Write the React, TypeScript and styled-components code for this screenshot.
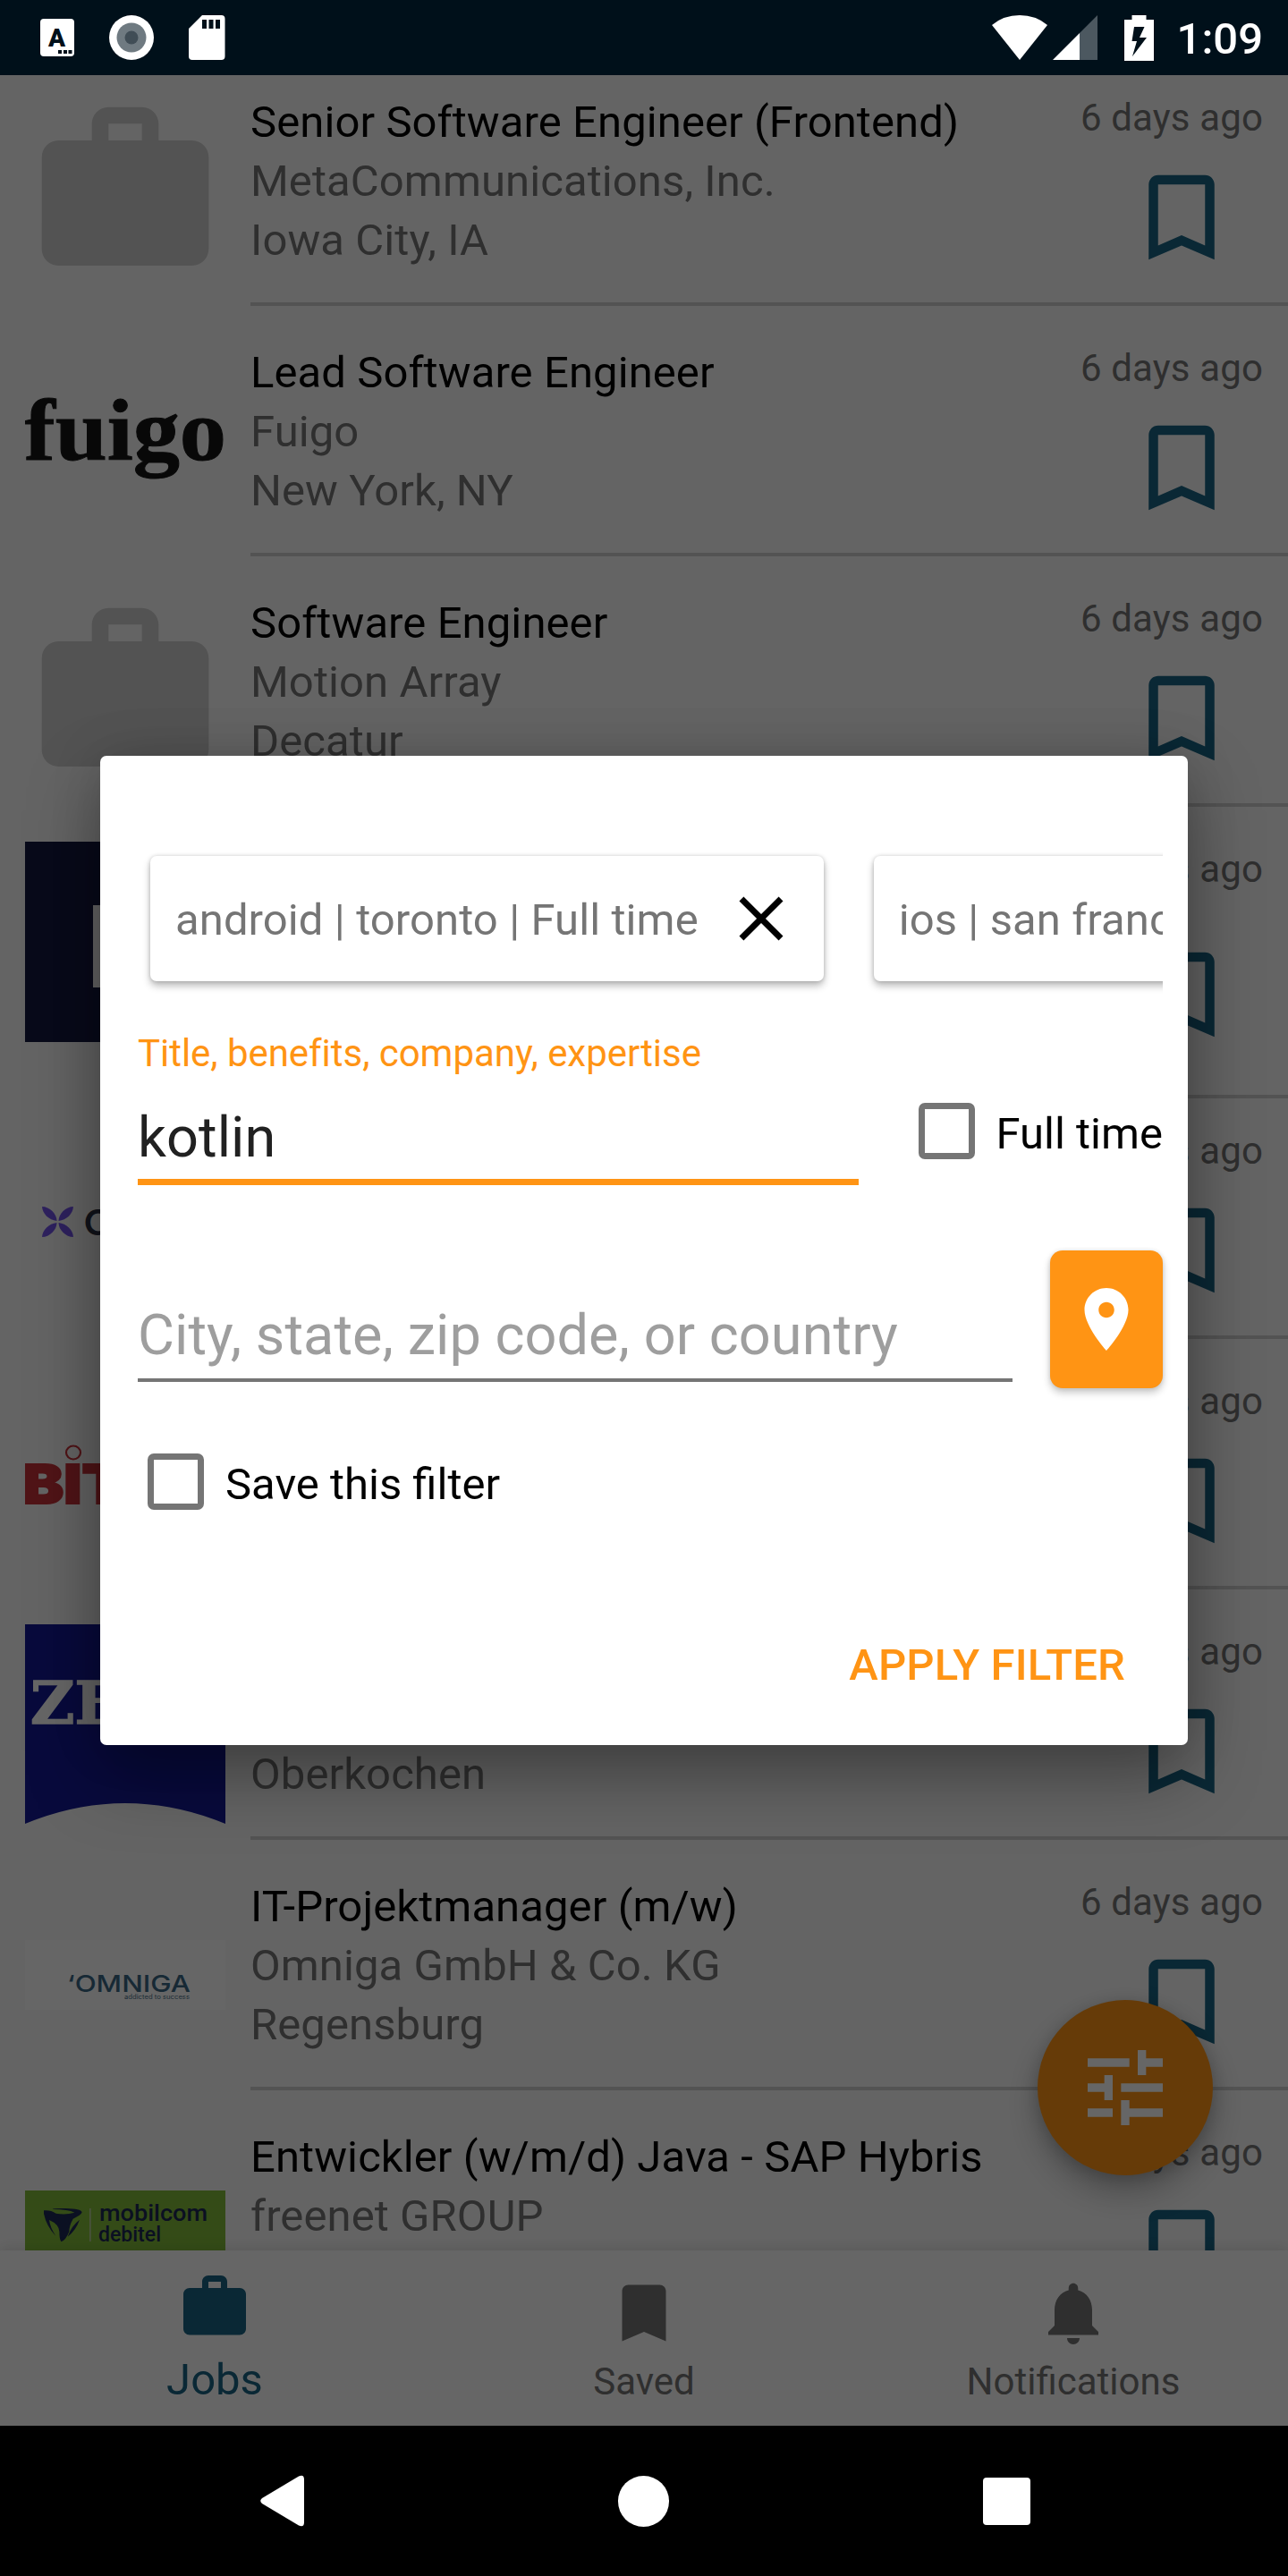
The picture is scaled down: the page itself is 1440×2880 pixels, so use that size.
import React from "react";
import styled, { createGlobalStyle } from "styled-components";

const GlobalStyle = createGlobalStyle`
  * { box-sizing: border-box; }
  body { margin: 0; background: #000; font-family: Roboto, "Noto Sans", sans-serif; }
  svg { display: block; }
`;

const accent = "#ff9414";
const teal = "#196484";
const secondary = "#757575";

/* ---------- Screen scaffold ---------- */

const Screen = styled.div`
  position: relative;
  display: grid;
  grid-template-rows: 84px 2432px 196px 168px;
  width: 1440px;
  height: 2880px;
  overflow: hidden;
  background: #fafafa;
`;

const StatusBar = styled.header`
  position: relative;
  z-index: 3;
  display: flex;
  align-items: center;
  justify-content: space-between;
  padding: 0 28px 0 45px;
  background: #00101a;
`;

const StatusGroup = styled.div<{ $gap?: number }>`
  display: flex;
  align-items: center;
  gap: ${(p) => p.$gap ?? 0}px;
`;

const SignalIcon = styled.svg`
  margin: 0 30px 0 6px;
`;

const Clock = styled.span`
  margin-left: 26px;
  padding-top: 4px;
  color: #fff;
  font-size: 49px;
  font-weight: 500;
  line-height: 58px;
`;

/* ---------- Job list ---------- */

const List = styled.main`
  position: relative;
  overflow: hidden;
`;

const Rows = styled.div`
  display: flex;
  flex-direction: column;
  margin-top: -22px;
`;

const Row = styled.article<{ $tall?: boolean }>`
  display: flex;
  flex-shrink: 0;
  gap: 28px;
  height: ${(p) => (p.$tall ? 326 : 280)}px;
  margin-bottom: ${(p) => (p.$tall ? -11 : 0)}px;
  padding-left: 28px;
`;

const Logo = styled.div`
  flex: 0 0 224px;
  height: 224px;
  margin-top: 39px;
`;

const RowBody = styled.div`
  display: flex;
  flex: 1;
  justify-content: space-between;
  border-bottom: 4px solid #d0d0d0;
`;

const JobText = styled.div`
  display: flex;
  flex-direction: column;
  padding-top: 42px;
  font-size: 49px;
  letter-spacing: 0.09px;
  line-height: 66px;
  white-space: nowrap;
`;

const Line = styled.span<{ $title?: boolean }>`
  min-height: 66px;
  color: ${(p) => (p.$title ? "#000" : secondary)};
`;

const Meta = styled.div<{ $tall?: boolean }>`
  display: flex;
  flex-direction: column;
  align-items: flex-end;
  gap: ${(p) => (p.$tall ? 52 : 23)}px;
  padding: 45px 28px 0 0;
`;

const Age = styled.span`
  color: ${secondary};
  font-size: 42px;
  letter-spacing: 0.15px;
  line-height: 50px;
  white-space: nowrap;
`;

const BookmarkIcon = styled.svg`
  width: 126px;
  height: 126px;
  margin-right: 28px;
  fill: ${teal};
`;

const Fab = styled.button`
  position: absolute;
  right: 84px;
  bottom: 84px;
  display: flex;
  align-items: center;
  justify-content: center;
  width: 196px;
  height: 196px;
  padding: 0;
  border: 0;
  border-radius: 50%;
  background: ${accent};
  box-shadow: 0 18px 36px rgba(0, 0, 0, 0.26), 0 4px 18px rgba(0, 0, 0, 0.16);
`;

/* ---------- Bottom navigation ---------- */

const Tabs = styled.nav`
  position: relative;
  display: grid;
  grid-template-columns: repeat(3, 1fr);
  background: #fff;
  box-shadow: 0 -2px 14px rgba(0, 0, 0, 0.12);
`;

const Tab = styled.div<{ $active?: boolean }>`
  display: flex;
  flex-direction: column;
  align-items: center;
  gap: ${(p) => (p.$active ? 7 : 8)}px;
  padding-top: ${(p) => (p.$active ? 21 : 28)}px;
  color: ${(p) => (p.$active ? teal : secondary)};
  font-size: ${(p) => (p.$active ? 49 : 42)}px;
  line-height: ${(p) => (p.$active ? 66 : 54)}px;

  svg {
    width: 84px;
    height: 84px;
    fill: currentColor;
  }
`;

const SystemBar = styled.footer`
  position: relative;
  z-index: 3;
  display: flex;
  align-items: center;
  justify-content: space-between;
  padding: 0 288px 0 291px;
  background: #000;
`;

/* ---------- Filter dialog ---------- */

const Scrim = styled.div`
  position: absolute;
  inset: 0;
  z-index: 2;
  display: flex;
  align-items: center;
  justify-content: center;
  padding: 84px 0 168px;
  background: rgba(0, 0, 0, 0.6);
`;

const Dialog = styled.section`
  display: flex;
  flex-direction: column;
  width: 1216px;
  height: 1106px;
  padding: 84px 28px 0;
  border-radius: 7px;
  background: #fff;
  box-shadow: 0 34px 80px rgba(0, 0, 0, 0.34), 0 0 60px rgba(0, 0, 0, 0.12);
`;

const Chips = styled.div`
  display: flex;
  flex-shrink: 0;
  gap: 56px;
  padding: 28px;
  overflow: hidden;
`;

const Chip = styled.div`
  display: flex;
  flex-shrink: 0;
  align-items: center;
  gap: 28px;
  height: 140px;
  padding: 0 28px;
  border-radius: 7px;
  background: #fff;
  box-shadow: 0 5px 9px rgba(0, 0, 0, 0.28), 0 0 4px rgba(0, 0, 0, 0.16);
`;

const ChipText = styled.span`
  padding-top: 4px;
  color: ${secondary};
  font-size: 49px;
  letter-spacing: 0.09px;
  line-height: 66px;
  white-space: nowrap;
`;

const Form = styled.div`
  display: flex;
  flex-direction: column;
  padding: 28px 0 0 14px;
`;

const FieldRow = styled.div`
  display: flex;
  justify-content: space-between;
`;

const Field = styled.div<{ $width: number }>`
  width: ${(p) => p.$width}px;
`;

const Label = styled.div`
  margin-bottom: 30px;
  color: ${accent};
  font-size: 42px;
  letter-spacing: -0.04px;
  line-height: 50px;
  white-space: nowrap;
`;

const Value = styled.div<{ $focused?: boolean }>`
  padding: 1px 0 ${(p) => (p.$focused ? 8 : 10)}px;
  border-bottom: ${(p) => (p.$focused ? `7px solid ${accent}` : `4px solid ${secondary}`)};
  color: ${(p) => (p.$focused ? "#212121" : "#9e9e9e")};
  font-size: 63px;
  letter-spacing: 0.06px;
  line-height: 76px;
  white-space: nowrap;
`;

const Check = styled.label<{ $top: number; $left?: number }>`
  display: flex;
  align-items: flex-start;
  gap: 24px;
  height: 68px;
  margin: ${(p) => p.$top}px 0 0 ${(p) => p.$left ?? 0}px;
  color: #000;
  font-size: 49px;
  line-height: 70px;
  white-space: nowrap;
`;

const Box = styled.span`
  width: 63px;
  height: 63px;
  border: 7px solid ${secondary};
  border-radius: 7px;
`;

const LocationRow = styled(FieldRow)`
  margin-top: 73px;

  ${Value} {
    margin-top: 56px;
  }
`;

const LocateButton = styled.button`
  display: flex;
  align-items: center;
  justify-content: center;
  width: 126px;
  height: 154px;
  padding: 0;
  border: 0;
  border-radius: 14px;
  background: ${accent};
  box-shadow: 0 5px 9px rgba(0, 0, 0, 0.22), 0 0 5px rgba(0, 0, 0, 0.1);
`;

const Apply = styled.button`
  align-self: flex-end;
  margin: 136px 42px 0 0;
  padding: 0;
  border: 0;
  background: none;
  color: ${accent};
  font: 500 49px/66px Roboto, sans-serif;
  letter-spacing: 0.12px;
`;

/* ---------- Drawings ---------- */

const WORK =
  "M20 6h-4V4c0-1.11-.89-2-2-2h-4c-1.11 0-2 .89-2 2v2H4c-1.11 0-1.99.89-1.99 2L2 19c0 1.11.89 2 2 2h16c1.11 0 2-.89 2-2V8c0-1.11-.89-2-2-2zm-6 0h-4V4h4v2z";

const Briefcase = ({ size, fill }: { size: number; fill?: string }) => (
  <svg width={size} height={size} viewBox="0 0 24 24" fill={fill}>
    <path d={WORK} />
  </svg>
);

const FuigoLogo = () => (
  <svg width="224" height="224" viewBox="0 0 224 224">
    <text x="-1" y="133" textLength="226" lengthAdjust="spacingAndGlyphs" fontFamily="Liberation Serif, serif" fontWeight="700" fontSize="98" fill="#161616" stroke="#161616" strokeWidth="1">
      fuigo
    </text>
  </svg>
);

const NavyLogo = () => (
  <svg width="224" height="224" viewBox="0 0 224 224">
    <path fill="#161a42" d="M0 0h224v224H0z" />
    <path fill="#fff" d="M76 71h24v92H76z" />
  </svg>
);

const PetalLogo = () => (
  <svg width="224" height="224" viewBox="0 0 224 224">
    <g fill="#7354ea" transform="translate(36.5 110)">
      <path d="M-1 -1C-1 -9-9 -17-17.500 -17C-17 -9-10 -2-1 -1z" />
      <path d="M1 -1C1 -9 9 -17 17.500 -17C17 -9 10 -2 1 -1z" />
      <path d="M-1 1C-1 9-9 17-17.500 17C-17 9-10 2-1 1z" />
      <path d="M1 1C1 9 9 17 17.500 17C17 9 10 2 1 1z" />
    </g>
    <text x="66" y="125" fontFamily="Lato, sans-serif" fontWeight="700" fontSize="40" fill="#2c3145">
      C
    </text>
  </svg>
);

const BitLogo = () => (
  <svg width="224" height="224" viewBox="0 0 224 224">
    <text x="-3" y="145" textLength="114" lengthAdjust="spacingAndGlyphs" fontFamily="Inter, sans-serif" fontWeight="900" fontSize="61" fill="#c8323a" stroke="#c8323a" strokeWidth="2">
      BIT
    </text>
    <ellipse cx="54" cy="88" rx="8" ry="7.500" fill="none" stroke="#c8323a" strokeWidth="2.200" />
  </svg>
);

const ZeissLogo = () => (
  <svg width="224" height="224" viewBox="0 0 224 224">
    <path fill="#141a96" d="M0 0h224v223Q112 177 0 223z" />
    <text x="6" y="111" textLength="101" lengthAdjust="spacingAndGlyphs" fontFamily="DejaVu Serif, serif" fontWeight="700" fontSize="66" fill="#fff" stroke="#fff" strokeWidth="1.500">
      ZE
    </text>
  </svg>
);

const OmnigaLogo = () => (
  <svg width="224" height="224" viewBox="0 0 224 224">
    <path fill="#fff" d="M0 73h224v78H0z" />
    <text x="47" y="131" textLength="138" lengthAdjust="spacingAndGlyphs" fontFamily="Inter, sans-serif" fontWeight="500" fontSize="26" fill="#3a6885">
      ‘OMNIGA
    </text>
    <text x="111" y="139" textLength="73" lengthAdjust="spacingAndGlyphs" fontFamily="Inter, sans-serif" fontSize="7" fill="#4d728a">
      addicted to success
    </text>
  </svg>
);

const MobilcomLogo = () => (
  <svg width="224" height="224" viewBox="0 0 224 224">
    <path fill="#82bc3a" d="M0 73h224v80H0z" />
    <g fill="#1c2855">
      <g transform="translate(-8 -216) scale(0.3333)">
        <path d="M87 934Q110 932 128 944Q160 950 190 941Q170 930 116 930Q118 926 160 927Q212 928 215 940Q212 950 185 962Q172 985 172 1005Q160 1035 145 1039Q139 1030 139 1005Q138 980 105 966Q108 990 127 1020Q95 985 87 945z" />
        <path d="M207 965Q180 985 167 1022Q195 1000 207 965z" />
      </g>
      <text x="83" y="107" textLength="121" lengthAdjust="spacingAndGlyphs" fontFamily="Roboto, sans-serif" fontWeight="500" fontSize="26">
        mobilcom
      </text>
      <text x="82" y="130" textLength="70" lengthAdjust="spacingAndGlyphs" fontFamily="Roboto, sans-serif" fontWeight="500" fontSize="24">
        debitel
      </text>
    </g>
    <path fill="#b9cc9c" d="M72 93h1.700v37H72z" />
  </svg>
);

const StatusIcons = () => (
  <StatusGroup $gap={39}>
    <svg width="38" height="42" viewBox="0 0 38 42">
      <rect width="38" height="42" rx="4" fill="#fff" />
      <text x="18.500" y="31" textAnchor="middle" fontFamily="Roboto, sans-serif" fontWeight="900" fontSize="28" fill="#00101a">
        A
      </text>
      <path fill="#00101a" d="M20 35h4v4h-4zM26 35h4v4h-4zM31.500 35h4v4h-4z" />
    </svg>
    <svg width="50" height="50" viewBox="0 0 50 50">
      <circle cx="25" cy="25" r="25" fill="#fff" />
      <circle cx="25" cy="25" r="16.500" fill="#6f7a81" />
      <circle cx="25" cy="25" r="7.500" fill="#404d56" />
    </svg>
    <svg width="41" height="50" viewBox="0 0 41 50">
      <path fill="#fff" fillRule="evenodd" d="M15 0H36.500Q40.500 0 40.500 4V46Q40.500 50 36.500 50H4Q0 50 0 46V15zM15 5v10h5V5zM22.500 5v10h5V5zM30 5v10h5V5z" />
    </svg>
  </StatusGroup>
);

const SignalIcons = () => (
  <StatusGroup>
    <svg width="62" height="50" viewBox="0 0 62 50">
      <path fill="#fff" d="M0 11Q13 0 31 0T62 11L31 50z" />
    </svg>
    <SignalIcon width="50" height="50" viewBox="0 0 50 50">
      <path fill="#4c5860" d="M50 0V50H30V20z" />
      <path fill="#fff" d="M30 20V50H0z" />
    </SignalIcon>
    <svg width="33" height="51" viewBox="0 0 33 51">
      <path fill="#fff" fillRule="evenodd" d="M8.500 0h16v5H33v46H0V5h8.500zM11 13L8.500 29h5.500L9 46L25 25h-8L22.500 13z" />
    </svg>
    <Clock>1:09</Clock>
  </StatusGroup>
);

/* ---------- Data ---------- */

type Job = {
  logo: React.ReactNode;
  title?: string;
  company?: string;
  place?: string;
  tall?: boolean;
};

const jobs: Job[] = [
  { logo: <Briefcase size={224} fill="#d0d0d0" />, title: "Senior Software Engineer (Frontend)", company: "MetaCommunications, Inc.", place: "Iowa City, IA" },
  { logo: <FuigoLogo />, title: "Lead Software Engineer", company: "Fuigo", place: "New York, NY" },
  { logo: <Briefcase size={224} fill="#d0d0d0" />, title: "Software Engineer", company: "Motion Array", place: "Decatur" },
  { logo: <NavyLogo />, tall: true },
  { logo: <PetalLogo /> },
  { logo: <BitLogo /> },
  { logo: <ZeissLogo />, place: "Oberkochen" },
  { logo: <OmnigaLogo />, title: "IT-Projektmanager (m/w)", company: "Omniga GmbH & Co. KG", place: "Regensburg" },
  { logo: <MobilcomLogo />, title: "Entwickler (w/m/d) Java - SAP Hybris", company: "freenet GROUP" },
];

const JobRow = ({ job }: { job: Job }) => (
  <Row $tall={job.tall}>
    <Logo>{job.logo}</Logo>
    <RowBody>
      <JobText>
        <Line $title>{job.title}</Line>
        <Line>{job.company}</Line>
        <Line>{job.place}</Line>
      </JobText>
      <Meta $tall={job.tall}>
        <Age>6 days ago</Age>
        <BookmarkIcon viewBox="0 0 24 24">
          <path d="M17 3H7c-1.100 0-1.990.9-1.990 2L5 21l7-3 7 3V5c0-1.100-.9-2-2-2zm0 15l-5-2.180L7 18V5h10v13z" />
        </BookmarkIcon>
      </Meta>
    </RowBody>
  </Row>
);

export default function App() {
  return (
    <>
      <GlobalStyle />
      <Screen>
        <StatusBar>
          <StatusIcons />
          <SignalIcons />
        </StatusBar>

        <List>
          <Rows>
            {jobs.map((job, i) => (
              <JobRow key={i} job={job} />
            ))}
          </Rows>
          <Fab aria-label="Filter">
            <svg width="112" height="112" viewBox="0 0 24 24" fill="#fff">
              <path d="M3 17v2h6v-2H3zM3 5v2h10V5H3zm10 16v-2h8v-2h-8v-2h-2v6h2zM7 9v2H3v2h4v2h2V9H7zm14 4v-2H11v2h10zm-6-4h2V7h4V5h-4V3h-2v6z" />
            </svg>
          </Fab>
        </List>

        <Tabs>
          <Tab $active>
            <Briefcase size={84} />
            Jobs
          </Tab>
          <Tab>
            <svg viewBox="0 0 24 24">
              <path d="M17 3H7c-1.100 0-1.990.9-1.990 2L5 21l7-3 7 3V5c0-1.100-.9-2-2-2z" />
            </svg>
            Saved
          </Tab>
          <Tab>
            <svg viewBox="0 0 24 24">
              <path d="M12 22c1.100 0 2-.9 2-2h-4c0 1.100.89 2 2 2zm6-6v-5c0-3.070-1.640-5.640-4.500-6.320V4c0-.83-.67-1.500-1.500-1.500s-1.500.67-1.500 1.500v.68C7.630 5.360 6 7.920 6 11v5l-2 2v1h16v-1l-2-2z" />
            </svg>
            Notifications
          </Tab>
        </Tabs>

        <SystemBar>
          <svg width="49" height="58" viewBox="0 0 49 58">
            <path fill="#fff" d="M2 26L43 1.500Q49 -1 49 5V53Q49 59 43 56.500L2 32Q-1.500 29 2 26z" />
          </svg>
          <svg width="57" height="57" viewBox="0 0 57 57">
            <circle cx="28.500" cy="28.500" r="28.500" fill="#fff" />
          </svg>
          <svg width="53" height="53" viewBox="0 0 53 53">
            <rect width="53" height="53" rx="4" fill="#fff" />
          </svg>
        </SystemBar>

        <Scrim>
          <Dialog role="dialog">
            <Chips>
              <Chip>
                <ChipText>android | toronto | Full time</ChipText>
                <svg width="84" height="84" viewBox="0 0 24 24" fill="#000">
                  <path d="M19 6.410L17.590 5 12 10.590 6.410 5 5 6.410 10.590 12 5 17.590 6.410 19 12 13.410 17.590 19 19 17.590 13.410 12z" />
                </svg>
              </Chip>
              <Chip>
                <ChipText>ios | san francisco</ChipText>
              </Chip>
            </Chips>
            <Form>
              <FieldRow>
                <Field $width={806}>
                  <Label>Title, benefits, company, expertise</Label>
                  <Value $focused>kotlin</Value>
                </Field>
                <Check $top={80}>
                  <Box />
                  Full time
                </Check>
              </FieldRow>
              <LocationRow>
                <Field $width={978}>
                  <Value>City, state, zip code, or country</Value>
                </Field>
                <LocateButton aria-label="Use my location">
                  <svg width="84" height="84" viewBox="0 0 24 24" fill="#fff">
                    <path d="M12 2C8.130 2 5 5.130 5 9c0 5.250 7 13 7 13s7-7.750 7-13c0-3.870-3.130-7-7-7zm0 9.500c-1.380 0-2.500-1.120-2.500-2.500s1.120-2.500 2.500-2.500 2.500 1.120 2.500 2.500-1.120 2.500-2.500 2.500z" />
                  </svg>
                </LocateButton>
              </LocationRow>
              <Check $top={73} $left={11}>
                <Box />
                Save this filter
              </Check>
              <Apply>APPLY FILTER</Apply>
            </Form>
          </Dialog>
        </Scrim>
      </Screen>
    </>
  );
}
